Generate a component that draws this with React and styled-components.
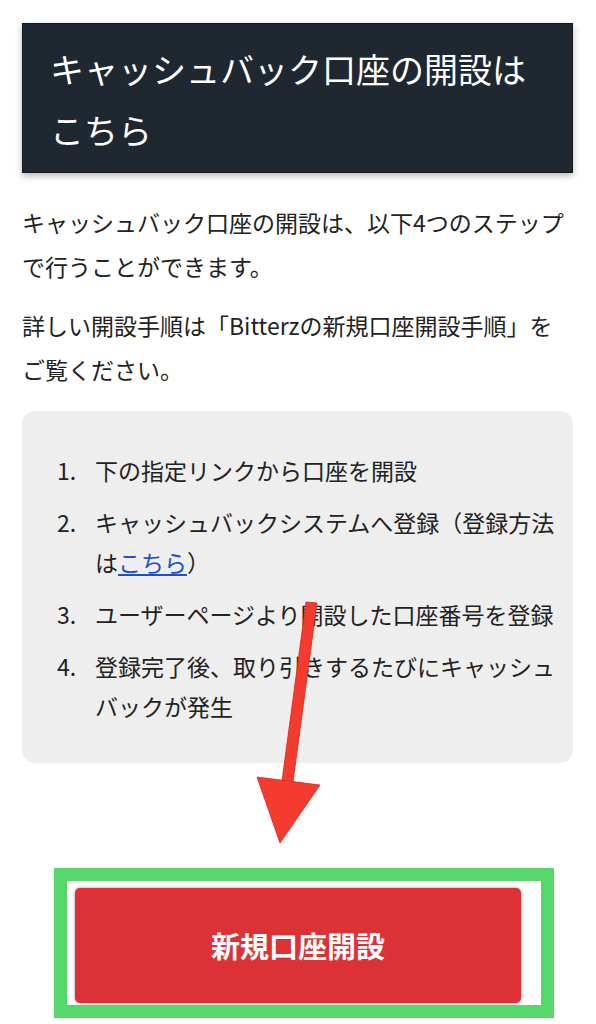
import React from "react";
import styled, { createGlobalStyle } from "styled-components";

const GlobalStyle = createGlobalStyle`
  html, body {
    margin: 0;
    padding: 0;
    background: #fff;
  }
  body {
    font-family: "Noto Sans CJK JP", "Noto Sans", sans-serif;
    color: #222;
  }
`;

const Page = styled.div`
  position: relative;
  width: 596px;
  height: 1024px;
  overflow: hidden;
  box-sizing: border-box;
  padding: 23px 23px 0 22px;
`;

const Heading = styled.h2`
  margin: 0;
  padding: 14px 28px 14px 27px;
  background: #1f2731;
  border: 1px solid #141a21;
  box-shadow: 0 3px 7px rgba(0, 0, 0, 0.28);
  color: #fff;
  font-size: 34px;
  font-weight: 400;
  line-height: 61px;
  box-sizing: border-box;
  height: 150px;
`;

const Paragraph = styled.p`
  margin: ${(p) => p.$top || 0}px 0 0;
  font-size: 23px;
  line-height: 44px;
  color: #222;
`;

const StepBox = styled.ol`
  list-style: none;
  margin: 20px 0 0;
  padding: 39px 12px 37px 35px;
  background: #eeeeee;
  border-radius: 13px;
  display: flex;
  flex-direction: column;
  gap: 12px;
`;

const Step = styled.li`
  display: flex;
  font-size: 23px;
  line-height: 40px;
  color: #222;
`;

const StepNum = styled.span`
  flex: 0 0 38px;
`;

const StepText = styled.span`
  flex: 1;
`;

const Link = styled.a`
  color: #1c4fd0;
  text-decoration: underline;
`;

const CtaFrame = styled.div`
  margin: 105px 0 0 32px;
  width: 500px;
  box-sizing: border-box;
  border: 13px solid #55d76a;
  padding: 7px 20px 2px 8px;
  background: #fff;
`;

const CtaButton = styled.a`
  display: flex;
  align-items: center;
  justify-content: center;
  height: 115px;
  border-radius: 5px;
  background: #dc3236;
  box-shadow: 0 0 3px rgba(0, 0, 0, 0.45);
  color: #fff;
  font-size: 29px;
  font-weight: 700;
  text-decoration: none;
  padding-bottom: 2px;
  box-sizing: border-box;
`;

const Arrow = styled.svg`
  position: absolute;
  left: 0;
  top: 0;
  pointer-events: none;
`;

const steps = [
  { n: "1.", text: "下の指定リンクから口座を開設" },
  {
    n: "2.",
    text: (
      <>
        キャッシュバックシステムへ登録（登録方法は<Link href="#">こちら</Link>）
      </>
    ),
  },
  { n: "3.", text: "ユーザーページより開設した口座番号を登録" },
  { n: "4.", text: "登録完了後、取り引きするたびにキャッシュバックが発生" },
];

export default function App() {
  return (
    <>
      <GlobalStyle />
      <Page>
        <Heading>キャッシュバック口座の開設はこちら</Heading>
        <Paragraph $top={27}>
          キャッシュバック口座の開設は、以下4つのステップで行うことができます。
        </Paragraph>
        <Paragraph $top={15}>
          詳しい開設手順は「Bitterzの新規口座開設手順」をご覧ください。
        </Paragraph>
        <StepBox>
          {steps.map((s) => (
            <Step key={s.n}>
              <StepNum>{s.n}</StepNum>
              <StepText>{s.text}</StepText>
            </Step>
          ))}
        </StepBox>
        <CtaFrame>
          <CtaButton href="#">新規口座開設</CtaButton>
        </CtaFrame>
        {/* red annotation arrow drawn over the list */}
        <Arrow width="596" height="1024" viewBox="0 0 596 1024">
          <polygon
            points="306,602 317,603 293,782 282,781"
            fill="#f43b2f"
            stroke="#d8261c"
            strokeWidth="0.8"
          />
          <polygon
            points="257,777 320,785 280,843"
            fill="#f43b2f"
            stroke="#d8261c"
            strokeWidth="0.8"
          />
        </Arrow>
      </Page>
    </>
  );
}
